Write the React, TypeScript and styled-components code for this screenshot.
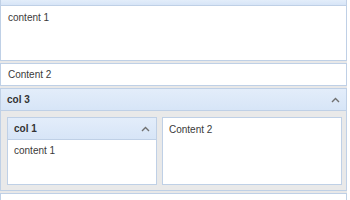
import React from 'react';
import styled, { createGlobalStyle } from 'styled-components';

const GlobalStyle = createGlobalStyle`
    html, body {
        margin: 0;
        padding: 0;
        background: #ffffff;
    }
    body {
        font-family: "Liberation Sans", Arial, sans-serif;
        font-size: 10px;
        color: #3a3a3a;
    }
`;

const Viewport = styled.div`
    width: 347px;
    height: 200px;
    overflow: hidden;
    display: flex;
    flex-direction: column;
    gap: 2px;
    background: #e8e8e8;
`;

const Panel = styled.section`
    display: flex;
    flex-direction: column;
    border: 1px solid #bfd0e6;
    background: #ffffff;
    flex-shrink: 0;
`;

const ClippedPanel = styled(Panel)`
    border-top: none;
`;

const Header = styled.header<{ $height?: number }>`
    display: flex;
    align-items: center;
    justify-content: space-between;
    height: ${(p) => p.$height ?? 21}px;
    padding: 0 6px;
    background: linear-gradient(#e3edfa, #d7e5f7);
    border-bottom: 1px solid #bfd0e6;
    font-weight: bold;
    color: #333333;
    flex-shrink: 0;
    overflow: hidden;
`;

const Body = styled.div<{ $height: number; $pad?: string }>`
    height: ${(p) => p.$height}px;
    padding: ${(p) => p.$pad ?? '6px 7px'};
    box-sizing: border-box;
    background: #ffffff;
    line-height: 13px;
`;

const ColumnsBody = styled.div`
    display: flex;
    gap: 5px;
    padding: 6px 4px 5px 6px;
    height: 79px;
    box-sizing: border-box;
    background: #e9e9e9;
`;

const LeftColumn = styled(Panel)`
    width: 150px;
    box-sizing: border-box;
`;

const RightColumn = styled(Panel)`
    flex: 1;
    padding: 5px 6px;
    line-height: 13px;
`;

const Chevron = () => (
    <svg width="9" height="6" viewBox="0 0 9 6">
        <path d="M1 5 L4.5 1.5 L8 5" fill="none" stroke="#707070" strokeWidth="1.4" />
    </svg>
);

export default function App() {
    return (
        <>
            <GlobalStyle />
            <Viewport>
                <ClippedPanel>
                    <Header $height={5} />
                    <Body $height={54} $pad="5px 7px">content 1</Body>
                </ClippedPanel>
                <Panel>
                    <Body $height={21} $pad="4px 7px">Content 2</Body>
                </Panel>
                <Panel>
                    <Header>
                        <span>col 3</span>
                        <Chevron />
                    </Header>
                    <ColumnsBody>
                        <LeftColumn>
                            <Header>
                                <span>col 1</span>
                                <Chevron />
                            </Header>
                            <Body $height={45} $pad="4px 6px">content 1</Body>
                        </LeftColumn>
                        <RightColumn>Content 2</RightColumn>
                    </ColumnsBody>
                </Panel>
                <Panel>
                    <Body $height={30}>{''}</Body>
                </Panel>
            </Viewport>
        </>
    );
}
